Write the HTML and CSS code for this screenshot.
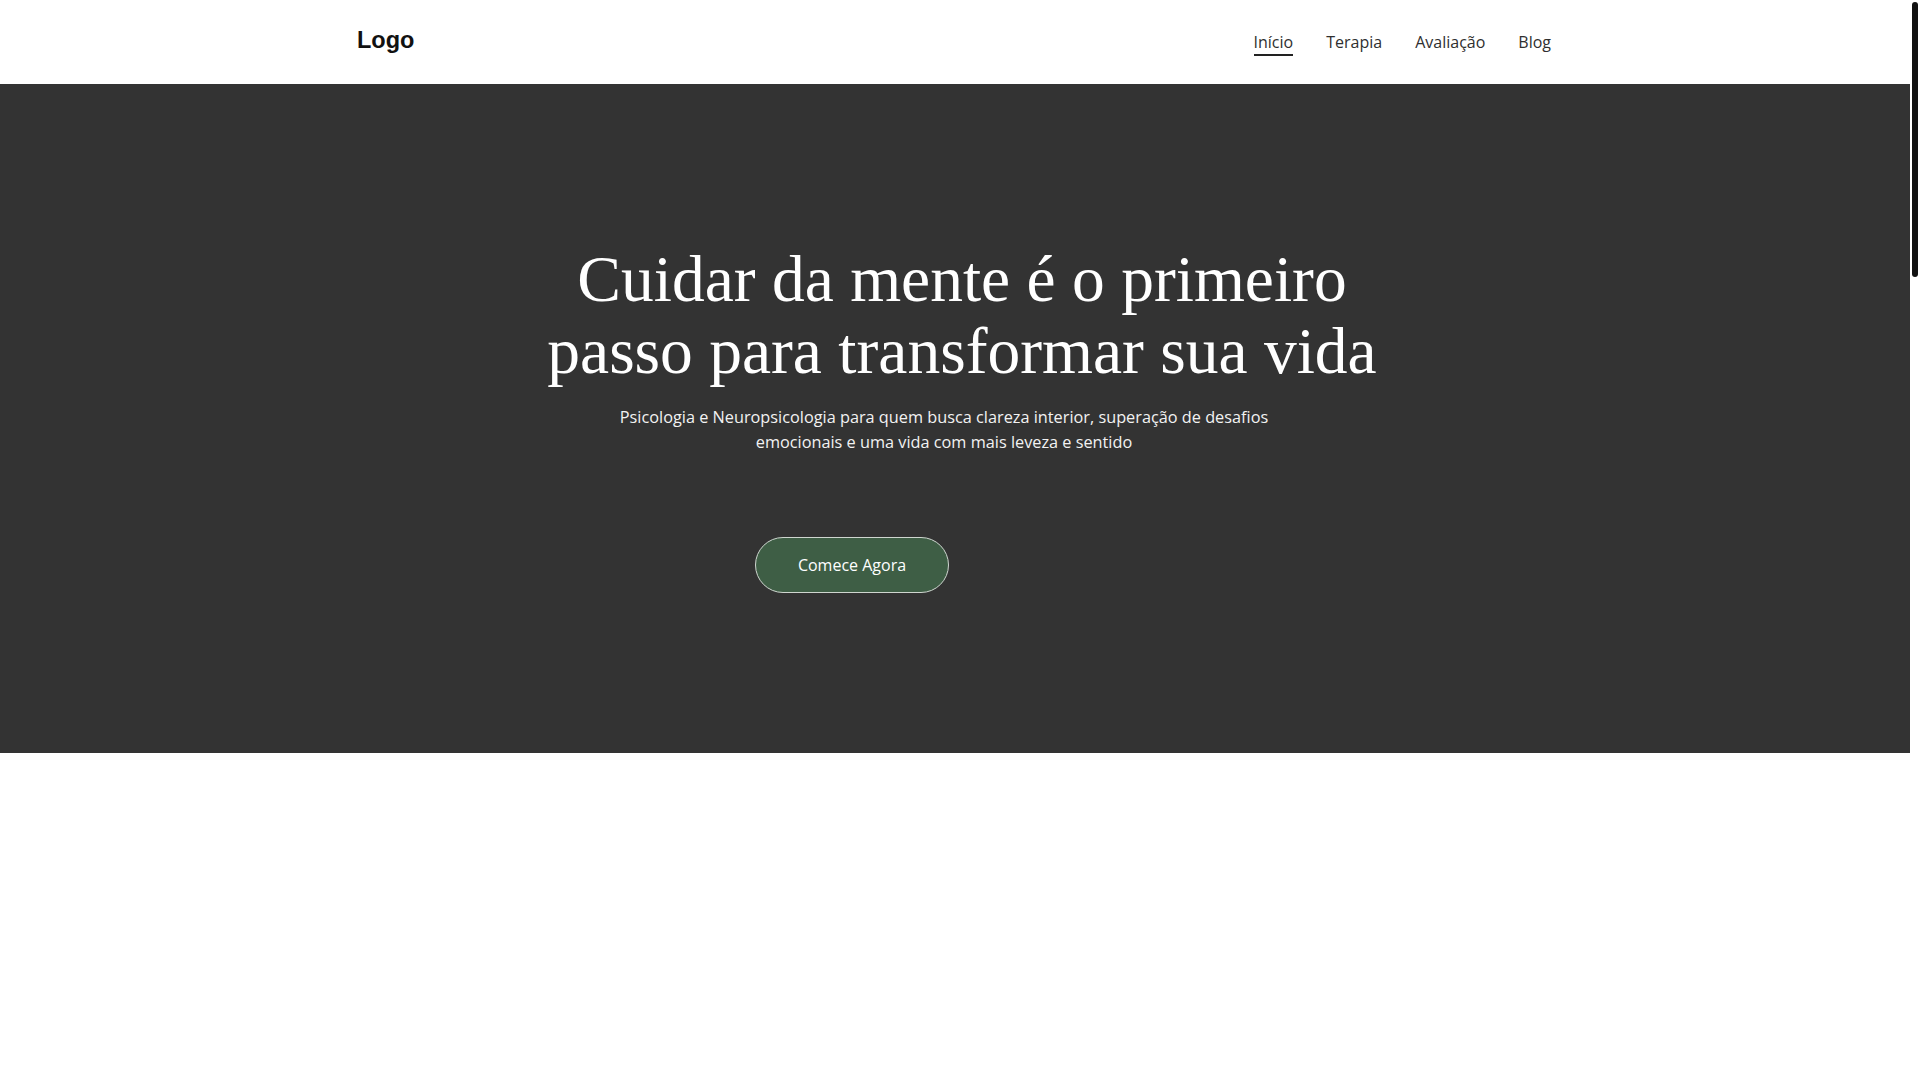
FILE: index.html
```html
<!DOCTYPE html>
<html lang="pt-BR">
<head>
<meta charset="utf-8">
<title>Psicologia e Neuropsicologia</title>
<link rel="stylesheet" href="styles.css">
</head>
<body>
<header class="site-header">
  <div class="container header-inner">
    <a class="logo" href="#">Logo</a>
    <nav class="nav">
      <a class="nav-link active" href="#">Início</a>
      <a class="nav-link" href="#">Terapia</a>
      <a class="nav-link" href="#">Avaliação</a>
      <a class="nav-link" href="#">Blog</a>
    </nav>
  </div>
</header>
<main>
  <section class="hero">
    <div class="container hero-inner">
      <h1 class="hero-title">Cuidar da mente é o primeiro passo para transformar sua vida</h1>
      <p class="hero-sub">Psicologia e Neuropsicologia para quem busca clareza interior, superação de desafios emocionais e uma vida com mais leveza e sentido</p>
      <div class="hero-actions">
        <a class="btn-primary" href="#">Comece Agora</a>
      </div>
    </div>
  </section>
  <section class="page-rest"></section>
</main>
<div class="scrollbar" aria-hidden="true"><div class="scrollbar-thumb"></div></div>
</body>
</html>
```
FILE: styles.css
```css
html::-webkit-scrollbar {
  width: 0;
  height: 0;
}

* {
  box-sizing: border-box;
}

body {
  margin: 0 10px 0 0;
  font-family: "Open Sans", "Noto Sans", sans-serif;
  color: #2e2e2e;
  background: #ffffff;
}

a {
  text-decoration: none;
  color: inherit;
}

.container {
  max-width: 1200px;
  margin: 0 auto;
}

.site-header {
  height: 84px;
  background: #ffffff;
}

.header-inner {
  height: 100%;
  display: flex;
  align-items: center;
  justify-content: space-between;
}

.logo {
  font-family: "Liberation Sans", Arial, sans-serif;
  font-weight: 700;
  font-size: 23.5px;
  line-height: 26px;
  color: #111111;
  margin-left: 2px;
  margin-bottom: 5px;
}

.nav {
  display: flex;
  align-items: center;
  gap: 33px;
  margin-top: 2px;
  margin-right: 4px;
}

.nav-link {
  font-size: 16px;
  line-height: 24px;
  color: #2f2f2f;
  border-bottom: 2px solid transparent;
}

.nav-link.active {
  border-bottom-color: #222222;
}

.hero {
  background: #333333;
  height: 669px;
  color: #ffffff;
}

.hero-inner {
  display: flex;
  flex-direction: column;
  align-items: center;
  padding-top: 159px;
  text-align: center;
}

.hero-title {
  margin: 0;
  max-width: 880px;
  font-family: "Liberation Serif", "Times New Roman", serif;
  font-weight: 400;
  font-size: 65.5px;
  line-height: 72px;
  padding-left: 14px;
}

.hero-sub {
  margin: 18px 0 0;
  max-width: 700px;
  font-size: 16.3px;
  line-height: 24.5px;
  color: #f2f2f2;
  padding-right: 22px;
}

.hero-actions {
  margin-top: 83px;
  display: flex;
  justify-content: center;
}

.btn-primary {
  display: inline-block;
  margin-right: 206px;
  padding: 15px 42px;
  font-size: 16px;
  line-height: 24px;
  color: #ffffff;
  background: #3e5e45;
  border: 1px solid #cfd6d0;
  border-radius: 999px;
}

.page-rest {
  height: 3477px;
  background: #ffffff;
}

.scrollbar {
  position: fixed;
  top: 0;
  right: 0;
  width: 10px;
  height: 100vh;
  background: #ffffff;
  padding: 2px;
}

.scrollbar-thumb {
  width: 6px;
  height: 275px;
  background: #111111;
  border-radius: 3px;
}
```
